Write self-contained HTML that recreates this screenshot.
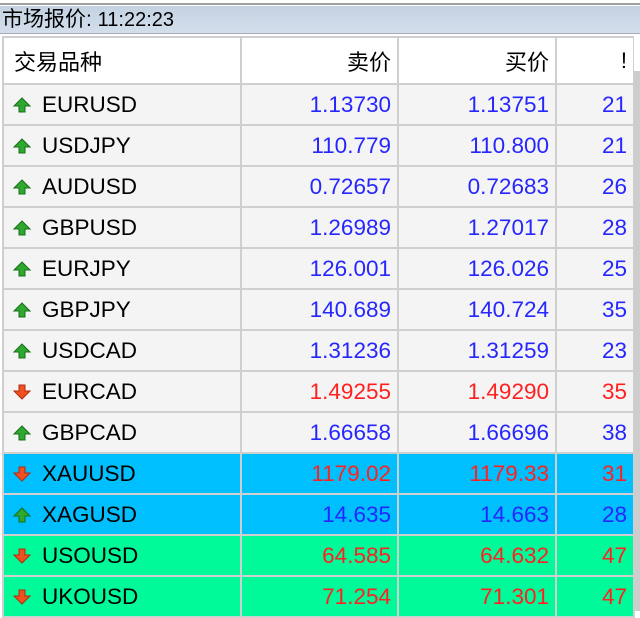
<!DOCTYPE html>
<html><head><meta charset="utf-8"><style>
body{margin:0;width:640px;height:611px;overflow:hidden;background:#fff;font-family:"Liberation Sans","Noto Sans CJK SC",sans-serif;position:relative}
.top{position:absolute;left:0;top:0;width:640px;height:3px;background:#fff;border-bottom:2px solid #a0a0a0}
.title{position:absolute;left:0;top:6px;width:640px;height:27px;background:linear-gradient(#c4d2e2,#d2deeb);font-size:21px;line-height:27px;color:#000;padding-left:2px;border-bottom:1px solid #aab}
.title span{font-size:20px}
table{position:absolute;left:2px;top:36px;border-collapse:collapse;width:631px;table-layout:fixed}
td{border:2px solid #cfcfcf;height:39px;padding:0 6px;font-size:22.5px;text-align:right;background:#f4f4f4;white-space:nowrap}
tr.h td{background:#fff;height:45px;font-size:22px}
td.s{text-align:left;padding-left:8px;color:#000}
.b{color:#2626ff}.r{color:#ff2020}
tr.c td{background:#00bfff}tr.g td{background:#00fa9a}
.ar{display:inline-block;width:20px;height:18px;vertical-align:-2px;margin-right:10px}
.sb{position:absolute;left:634px;top:36px;width:6px;height:575px;background:#fff}
.sb div{position:absolute;left:0;top:35px;width:6px;height:540px;background:#cdcdcd}
</style></head><body>
<div class="top"></div>
<div class="title">市场报价: <span>11:22:23</span></div>
<table>
<colgroup><col style="width:238px"><col style="width:157px"><col style="width:158px"><col style="width:78px"></colgroup>
<tr class="h"><td class="s" style="padding-left:10px">交易品种</td><td>卖价</td><td>买价</td><td>!</td></tr>
<tr><td class="s"><svg class="ar" viewBox="0 0 20 18"><path d="M10 2L18 10H13V16H7V10H2Z" fill="#2ea82e" stroke="#1a6e1a"/></svg>EURUSD</td><td class="b">1.13730</td><td class="b">1.13751</td><td class="b">21</td></tr>
<tr><td class="s"><svg class="ar" viewBox="0 0 20 18"><path d="M10 2L18 10H13V16H7V10H2Z" fill="#2ea82e" stroke="#1a6e1a"/></svg>USDJPY</td><td class="b">110.779</td><td class="b">110.800</td><td class="b">21</td></tr>
<tr><td class="s"><svg class="ar" viewBox="0 0 20 18"><path d="M10 2L18 10H13V16H7V10H2Z" fill="#2ea82e" stroke="#1a6e1a"/></svg>AUDUSD</td><td class="b">0.72657</td><td class="b">0.72683</td><td class="b">26</td></tr>
<tr><td class="s"><svg class="ar" viewBox="0 0 20 18"><path d="M10 2L18 10H13V16H7V10H2Z" fill="#2ea82e" stroke="#1a6e1a"/></svg>GBPUSD</td><td class="b">1.26989</td><td class="b">1.27017</td><td class="b">28</td></tr>
<tr><td class="s"><svg class="ar" viewBox="0 0 20 18"><path d="M10 2L18 10H13V16H7V10H2Z" fill="#2ea82e" stroke="#1a6e1a"/></svg>EURJPY</td><td class="b">126.001</td><td class="b">126.026</td><td class="b">25</td></tr>
<tr><td class="s"><svg class="ar" viewBox="0 0 20 18"><path d="M10 2L18 10H13V16H7V10H2Z" fill="#2ea82e" stroke="#1a6e1a"/></svg>GBPJPY</td><td class="b">140.689</td><td class="b">140.724</td><td class="b">35</td></tr>
<tr><td class="s"><svg class="ar" viewBox="0 0 20 18"><path d="M10 2L18 10H13V16H7V10H2Z" fill="#2ea82e" stroke="#1a6e1a"/></svg>USDCAD</td><td class="b">1.31236</td><td class="b">1.31259</td><td class="b">23</td></tr>
<tr><td class="s"><svg class="ar" viewBox="0 0 20 18"><path d="M10 16L18 8H13V2H7V8H2Z" fill="#f05020" stroke="#b02a10"/></svg>EURCAD</td><td class="r">1.49255</td><td class="r">1.49290</td><td class="r">35</td></tr>
<tr><td class="s"><svg class="ar" viewBox="0 0 20 18"><path d="M10 2L18 10H13V16H7V10H2Z" fill="#2ea82e" stroke="#1a6e1a"/></svg>GBPCAD</td><td class="b">1.66658</td><td class="b">1.66696</td><td class="b">38</td></tr>
<tr class="c"><td class="s"><svg class="ar" viewBox="0 0 20 18"><path d="M10 16L18 8H13V2H7V8H2Z" fill="#f05020" stroke="#b02a10"/></svg>XAUUSD</td><td class="r">1179.02</td><td class="r">1179.33</td><td class="r">31</td></tr>
<tr class="c"><td class="s"><svg class="ar" viewBox="0 0 20 18"><path d="M10 2L18 10H13V16H7V10H2Z" fill="#2ea82e" stroke="#1a6e1a"/></svg>XAGUSD</td><td class="b">14.635</td><td class="b">14.663</td><td class="b">28</td></tr>
<tr class="g"><td class="s"><svg class="ar" viewBox="0 0 20 18"><path d="M10 16L18 8H13V2H7V8H2Z" fill="#f05020" stroke="#b02a10"/></svg>USOUSD</td><td class="r">64.585</td><td class="r">64.632</td><td class="r">47</td></tr>
<tr class="g"><td class="s"><svg class="ar" viewBox="0 0 20 18"><path d="M10 16L18 8H13V2H7V8H2Z" fill="#f05020" stroke="#b02a10"/></svg>UKOUSD</td><td class="r">71.254</td><td class="r">71.301</td><td class="r">47</td></tr>
</table>
<div class="sb"><div></div></div>
</body></html>
